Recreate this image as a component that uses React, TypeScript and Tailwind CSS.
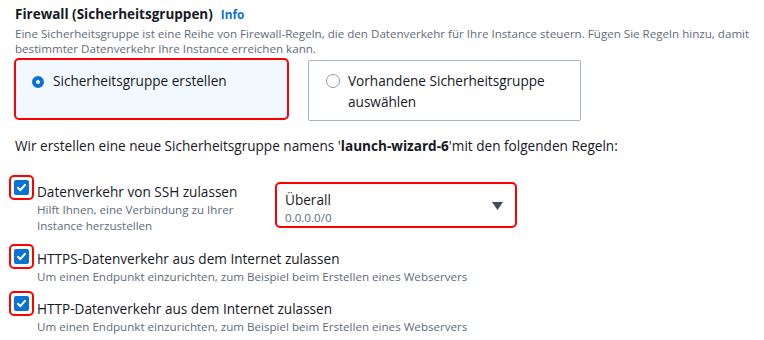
import React from "react";

const font = { fontFamily: '"Open Sans", "Noto Sans", sans-serif' };

function Checkbox() {
  return (
    <div className="shrink-0 w-[25px] h-[25px] border-2 border-[#ff0000] rounded-[5px] flex items-center justify-center">
      <div className="w-[15px] h-[15px] bg-[#0972d3] rounded-[2px] flex items-center justify-center">
        <svg width="11" height="11" viewBox="0 0 11 11">
          <path d="M2 5.8 L4.4 8.2 L9 2.8" fill="none" stroke="#fff" strokeWidth="2" strokeLinecap="round" strokeLinejoin="round" />
        </svg>
      </div>
    </div>
  );
}

export default function App() {
  return (
    <div className="w-[764px] h-[340px] bg-white overflow-hidden pl-[15px] pt-[4px] text-[#16191f]" style={font}>
      <div className="flex items-baseline gap-[8px] leading-[20px]">
        <span className="text-[13.5px] font-bold">Firewall (Sicherheitsgruppen)</span>
        <span className="text-[11.8px] font-bold text-[#0972d3]">Info</span>
      </div>
      <div className="text-[11.6px] leading-[15px] text-[#5f6b7a] mt-[2px] pr-[4px]">
        Eine Sicherheitsgruppe ist eine Reihe von Firewall-Regeln, die den Datenverkehr für Ihre Instance steuern. Fügen Sie Regeln hinzu, damit bestimmter Datenverkehr Ihre Instance erreichen kann.
      </div>
      <div className="flex items-start gap-[19px] mt-[2px] ml-[-1px]">
        <div className="w-[275px] h-[62px] border-2 border-[#ff0000] rounded-[5px] bg-[#f1f8fe] flex items-start pl-[16px] pt-[11px]">
          <div className="mt-[5px] w-[12px] h-[12px] rounded-full border-[4px] border-[#0972d3] bg-white shrink-0" />
          <span className="ml-[9px] text-[13.6px] leading-[20px]">Sicherheitsgruppe erstellen</span>
        </div>
        <div className="mt-[2px] w-[273px] h-[61px] border border-[#aab7b8] rounded-[2px] flex items-start pl-[17px] pt-[9px]">
          <div className="mt-[4px] w-[14px] h-[14px] rounded-full border border-[#8d99a8] bg-white shrink-0" />
          <span className="ml-[8px] text-[13.6px] leading-[21px] w-[215px]">Vorhandene Sicherheitsgruppe auswählen</span>
        </div>
      </div>
      <div className="mt-[15px] text-[13.6px] leading-[20px]">
        Wir erstellen eine neue Sicherheitsgruppe namens '<span className="font-bold">launch-wizard-6</span>'mit den folgenden Regeln:
      </div>

      <div className="flex items-start mt-[19px] ml-[-6px]">
        <Checkbox />
        <div className="ml-[3px] w-[220px] mt-[7px]">
          <div className="text-[13.6px] leading-[20px]">Datenverkehr von SSH zulassen</div>
          <div className="text-[11.6px] leading-[16px] text-[#5f6b7a] w-[200px]">Hilft Ihnen, eine Verbindung zu Ihrer Instance herzustellen</div>
        </div>
        <div className="ml-[18px] mt-[7px] w-[242px] h-[46px] border-2 border-[#ff0000] rounded-[5px] flex items-start justify-between pl-[8px] pr-[12px] pt-[7px]">
          <div>
            <div className="text-[13.6px] leading-[18px]">Überall</div>
            <div className="text-[11.6px] leading-[18px] text-[#5f6b7a]">0.0.0.0/0</div>
          </div>
          <svg className="self-center mt-[-6px]" width="11" height="8" viewBox="0 0 11 8">
            <path d="M0 0 H11 L5.5 8 Z" fill="#414d5c" />
          </svg>
        </div>
      </div>

      <div className="flex items-start mt-[10px] ml-[-6px]">
        <Checkbox />
        <div className="ml-[3px] mt-[5px]">
          <div className="text-[13.6px] leading-[20px]">HTTPS-Datenverkehr aus dem Internet zulassen</div>
          <div className="text-[11.6px] leading-[16px] text-[#5f6b7a]">Um einen Endpunkt einzurichten, zum Beispiel beim Erstellen eines Webservers</div>
        </div>
      </div>

      <div className="flex items-start mt-[6px] ml-[-6px]">
        <Checkbox />
        <div className="ml-[3px] mt-[8px]">
          <div className="text-[13.6px] leading-[20px]">HTTP-Datenverkehr aus dem Internet zulassen</div>
          <div className="text-[11.6px] leading-[16px] text-[#5f6b7a]">Um einen Endpunkt einzurichten, zum Beispiel beim Erstellen eines Webservers</div>
        </div>
      </div>
    </div>
  );
}
